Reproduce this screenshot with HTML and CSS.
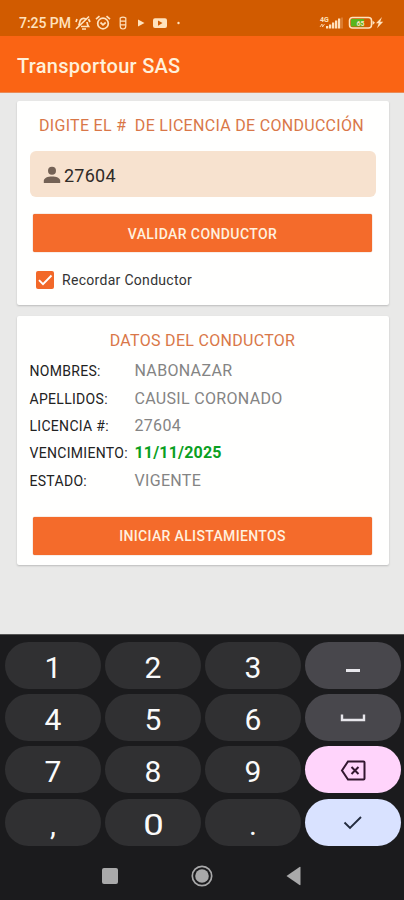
FILE: index.html
```
<!DOCTYPE html>
<html lang="es">
<head>
<meta charset="utf-8">
<meta name="viewport" content="width=device-width, initial-scale=1">
<title>Transportour SAS</title>
<link rel="stylesheet" href="styles.css">
</head>
<body>
<header>
  <div class="status">
    <span class="time">7:25 PM</span>
    <svg class="status-left" width="110" height="18" viewBox="0 0 110 18" fill="none" stroke="currentColor" stroke-width="1.7">
      <path d="M4.5 11.500c1.500-1.500.5-5 3-6.500 2-1.200 4-.5 5 1M13 8c.2 2 .4 3 1.500 4.500H7M8 15h4M2 15L15 2.500M3 5l-1 3M14.500 5l1.500 3"/>
      <circle cx="29" cy="9.500" r="5.300"/><path d="M26.500 8.500L29 10.800l2.700-2.300M22 5.200l3.500-3M36 5.200l-3.500-3"/>
      <path d="M46.200 4v8q0 3 2.800 3t2.800-3V4q-2.800-1.800-5.600 0zM46 7.200h6M46 10.800h6" stroke-width="1.200"/>
      <path d="M64 5.500v7l6.500-3.500z" fill="currentColor" stroke="none"/>
      <rect x="79" y="4.200" width="14" height="9.800" rx="2" fill="currentColor" stroke="none"/><path class="play" d="M84 6.500v5.200l4.500-2.600z"/>
      <circle cx="104.500" cy="9" r="1.200" fill="currentColor" stroke="none"/>
    </svg>
    <svg class="status-right" width="68" height="18" viewBox="0 0 68 18" fill="currentColor">
      <text class="network" x="1" y="7.500">4G</text>
      <path d="M1 13l2-3 .5 3 2-3" fill="none" stroke="currentColor" stroke-width=".8"/>
      <path d="M7 12h2.300v2.500H7zM10 10.500h2.300v4H10zM13 8.500h2.300v6H13zM16 6.500h2.300v8H16zM19 4.500h2.300v10H19z"/><path d="M22.500 3.500h1v11h-1z" opacity=".5"/>
      <rect x="30.500" y="3.500" width="22" height="10.500" rx="3" fill="none" stroke="currentColor" stroke-width="1.500"/>
      <path class="charge" d="M32 5h13v7.500H32z"/><text class="level" x="37.500" y="11.500">65</text>
      <path d="M53.500 6.500l2.500 2.200-2.500 2.200zM63 3l-6 6.200h2.700l-1.700 5 6.200-6.500h-3z"/>
    </svg>
  </div>
  <div class="appbar"><h1>Transportour SAS</h1></div>
</header>
<main>
  <section class="card license">
    <h2>DIGITE EL #&nbsp; DE LICENCIA DE CONDUCCIÓN</h2>
    <div class="field">
      <svg width="18" height="18" viewBox="0 0 18 18" fill="currentColor"><circle cx="9" cy="4.800" r="4"/><path d="M.8 17v-2.200c0-2.800 4-4.300 8.200-4.300s8.200 1.500 8.200 4.300V17z"/></svg>
      <span>27604</span>
    </div>
    <button class="action">VALIDAR CONDUCTOR</button>
    <div class="remember">
      <span class="checkbox"><svg width="18" height="18" viewBox="0 0 18 18" fill="none" stroke="currentColor" stroke-width="1.900"><path d="M3 9.200l4 4 8.500-8.700"/></svg></span>
      <span>Recordar Conductor</span>
    </div>
  </section>
  <section class="card driver">
    <h2>DATOS DEL CONDUCTOR</h2>
    <dl>
      <dt>NOMBRES:</dt><dd>NABONAZAR</dd>
      <dt>APELLIDOS:</dt><dd>CAUSIL CORONADO</dd>
      <dt>LICENCIA #:</dt><dd>27604</dd>
      <dt>VENCIMIENTO:</dt><dd class="date">11/11/2025</dd>
      <dt>ESTADO:</dt><dd>VIGENTE</dd>
    </dl>
    <button class="action start">INICIAR ALISTAMIENTOS</button>
  </section>
</main>
<footer>
  <div class="keys">
    <span class="key">1</span><span class="key">2</span><span class="key">3</span>
    <span class="key soft"><svg width="28" height="20" viewBox="0 0 28 20" fill="currentColor"><path d="M7 13h14v3H7z"/></svg></span>
    <span class="key">4</span><span class="key">5</span><span class="key">6</span>
    <span class="key soft"><svg width="28" height="20" viewBox="0 0 28 20" fill="none" stroke="currentColor" stroke-width="2.400"><path d="M3 6.500V12h22V6.500"/></svg></span>
    <span class="key">7</span><span class="key">8</span><span class="key">9</span>
    <span class="key delete"><svg width="28" height="22" viewBox="0 0 28 22" fill="none" stroke="currentColor" stroke-width="2"><path d="M9 2.500h15.500q1 0 1 1v16q0 1-1 1H9l-6-9zM12.500 8l7 7M19.500 8l-7 7"/></svg></span>
    <span class="key">,</span><span class="key"><span class="zero">0</span></span><span class="key">.</span>
    <span class="key enter"><svg width="28" height="20" viewBox="0 0 28 20" fill="none" stroke="currentColor" stroke-width="1.900"><path d="M5.500 10.500l5.500 5.500L22 5"/></svg></span>
  </div>
  <nav>
    <svg width="18" height="24" viewBox="0 0 18 24"><rect x="1" y="4" width="16" height="16" rx="2" fill="currentColor"/></svg>
    <svg width="24" height="24" viewBox="0 0 24 24" fill="none" stroke="currentColor" stroke-width="1.700"><circle cx="12" cy="12" r="9.700"/><circle cx="12" cy="12" r="6.800" fill="currentColor" stroke="none"/></svg>
    <svg width="18" height="24" viewBox="0 0 18 24" fill="currentColor"><path d="M15.500 3.500v17q0 1-1 .5L1.500 12l13-9q1-.5 1 .5z"/></svg>
  </nav>
</footer>
</body>
</html>
```
FILE: styles.css
```
* { box-sizing: border-box; }
body {
  margin: 0;
  height: 900px;
  display: flex;
  flex-direction: column;
  background: #e9e9e8;
  font-family: Roboto, "Liberation Sans", sans-serif;
  overflow: hidden;
}
h1, h2, dl, dd { margin: 0; }
svg { display: block; flex: none; }
.status {
  height: 36px;
  display: flex;
  align-items: center;
  padding: 10px 17px 0 19px;
  background: #d15b00;
  color: #ffe2bd;
}
.time { width: 55px; font-size: 14px; font-weight: 500; white-space: nowrap; letter-spacing: -.05px; }
.status-right { margin-left: auto; }
.network { font-size: 7px; font-weight: 700; }
.level { font-size: 7px; font-weight: 700; }
.charge { fill: #58b51c; }
.play { fill: #d15b00; stroke: none; }
.appbar {
  height: 57px;
  display: flex;
  align-items: center;
  padding: 3px 17px 0;
  background: #fa6414;
  border-bottom: 1px solid #e98b58;
  color: #fff0d9;
}
h1 { font-size: 20px; font-weight: 500; letter-spacing: .28px; }
main { flex: 1; padding: 8px 15.500px 0 16.500px; }
.card {
  background: #fffffe;
  border-radius: 2px;
  box-shadow: 0 1px 2px #bbb;
  display: flex;
  flex-direction: column;
}
.license { height: 204px; margin-bottom: 11px; padding: 14px 13px 0; }
.driver { height: 249px; padding: 14px 13px 0; }
h2 { color: #d97748; font-size: 16px; font-weight: 400; line-height: 21px; letter-spacing: .3px; text-align: center; white-space: nowrap; }
.license h2 { margin: 0 1px 0 -1px; }
.field {
  height: 46px;
  margin: 15px 0 17px;
  border-radius: 6px;
  background: #f7e2cf;
  display: flex;
  align-items: center;
  padding: 2px 0 0 13.500px;
  gap: 3px;
  color: #302b27;
  font-size: 18px;
  letter-spacing: .25px;
}
.field svg { color: #746256; }
.action {
  width: 339px;
  height: 38px;
  flex: none;
  margin: 0 auto;
  padding: 1px 0 0;
  border: 0;
  border-radius: 2px;
  background: #f46b2b;
  box-shadow: 0 0 1px #b95020;
  color: #fff0df;
  font: 500 14px Roboto, sans-serif;
  letter-spacing: .4px;
}
.start { letter-spacing: .34px; }
.remember { display: flex; align-items: center; gap: 8px; margin: 18px 0 0 6.500px; color: #333; font-size: 14px; letter-spacing: .3px; line-height: 20px; }
.checkbox { background: #f26829; border-radius: 2px; color: #fff; }
dl { display: grid; grid-template-columns: 105px 1fr; grid-auto-rows: 27.400px; align-items: center; margin: 6px 0 23px; }
dt { padding-top: 1px; color: #222; font-size: 14px; letter-spacing: .3px; white-space: nowrap; }
dd { color: #848484; font-size: 16px; letter-spacing: .32px; white-space: nowrap; }
.date { color: #0aa022; font-weight: 700; letter-spacing: .18px; }
footer { height: 266px; background: #1b1b1d; border-top: 1px solid #555; }
.keys {
  display: grid;
  grid-template-columns: repeat(4, 96px);
  grid-template-rows: repeat(4, 47px);
  gap: 5.200px 4px;
  padding: 7px 0 0 5px;
}
.key {
  display: flex;
  align-items: center;
  justify-content: center;
  padding-top: 4px;
  border-radius: 24px;
  background: #303032;
  color: #fafafa;
  font-size: 30px;
}
.key svg { margin-top: -4px; }
.zero { transform: scaleX(1.22); }
.soft { background: #48474c; color: #e7e6eb; }
.delete { background: #ffd4fb; color: #32172f; }
.enter { background: #d9e2ff; color: #242c3e; }
nav { display: flex; justify-content: space-between; align-items: center; padding: 18px 101px 0; color: #a9a9aa; }
```
